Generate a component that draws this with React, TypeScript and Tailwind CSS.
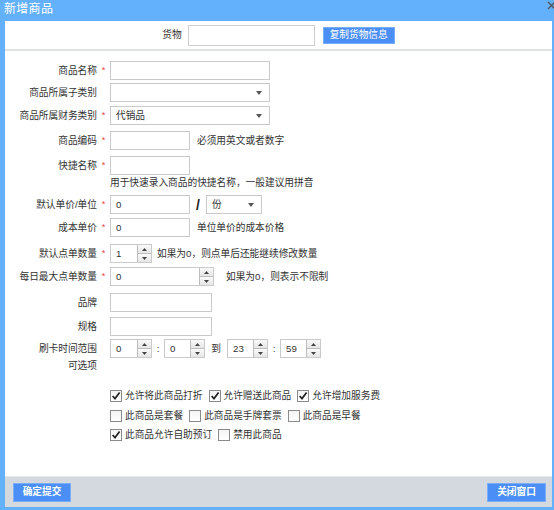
import React from "react";

const FONT = "font-['Liberation_Sans','Noto_Sans_CJK_SC',sans-serif]";

function Star() {
  return <span className="text-[#e4473f] text-[9px] leading-none">*</span>;
}

function Row({
  label,
  req,
  children,
  className,
}: {
  label: string;
  req?: boolean;
  children?: React.ReactNode;
  className: string;
}) {
  return (
    <div className={"flex items-center h-[19px] " + className}>
      <div className="w-[92px] text-right leading-[19px]">{label}</div>
      <div className="w-[13px] flex justify-center items-center">{req ? <Star /> : null}</div>
      {children}
    </div>
  );
}

function Input({ w, v }: { w: string; v?: string }) {
  return (
    <div className={"h-[19px] border border-[#cacaca] bg-white px-[5px] flex items-center leading-none text-[#333] " + w}>
      {v}
    </div>
  );
}

function Arrow({ up }: { up?: boolean }) {
  return (
    <svg width="5" height="3" viewBox="0 0 5 3">
      {up ? <path d="M0 3 L2.5 0 L5 3 Z" fill="#444" /> : <path d="M0 0 L2.5 3 L5 0 Z" fill="#444" />}
    </svg>
  );
}

function Select({ w, v }: { w: string; v?: string }) {
  return (
    <div className={"h-[19px] border border-[#cacaca] bg-white pl-[5px] pr-[7px] flex items-center justify-between text-[#333] " + w}>
      <span className="leading-none">{v}</span>
      <svg width="6" height="4" viewBox="0 0 6 4">
        <path d="M0 0 L3 4 L6 0 Z" fill="#555" />
      </svg>
    </div>
  );
}

function Spin({ w, v }: { w: string; v: string }) {
  return (
    <div className={"h-[19px] flex border border-[#cacaca] bg-white " + w}>
      <div className="flex-1 pl-[5px] flex items-center leading-none text-[#333]">{v}</div>
      <div className="w-[14px] flex flex-col border-l border-[#bdbdbd] bg-[#f0f0f0]">
        <div className="flex-1 flex items-center justify-center border-b border-[#bdbdbd] bg-gradient-to-b from-[#fafafa] to-[#e6e6e6]">
          <Arrow up />
        </div>
        <div className="flex-1 flex items-center justify-center bg-gradient-to-b from-[#fafafa] to-[#e6e6e6]">
          <Arrow />
        </div>
      </div>
    </div>
  );
}

function Check({ on, label, first }: { on?: boolean; label: string; first?: boolean }) {
  return (
    <div className={"flex items-center gap-[3px] " + (first ? "" : "ml-[6px]")}>
      <div className="w-[12px] h-[12px] border border-[#8a8a8a] bg-gradient-to-b from-[#f4f4f4] to-white flex items-center justify-center">
        {on ? (
          <svg width="10" height="10" viewBox="0 0 10 10">
            <path d="M1.6 5 L4 7.6 L8.6 1.6" stroke="#222" strokeWidth="1.7" fill="none" />
          </svg>
        ) : null}
      </div>
      <span className="leading-none whitespace-nowrap">{label}</span>
    </div>
  );
}

export default function App() {
  return (
    <div className={"w-[554px] h-[510px] bg-[#63b0fc] flex flex-col overflow-hidden text-[9.7px] text-[#333] " + FONT}>
      <div className="h-[21px] flex justify-between items-start">
        <span className="pl-[4px] pt-[1px] text-white text-[12px] leading-[13px] tracking-[0.3px] font-['Noto_Sans_CJK_SC',sans-serif]">新增商品</span>
        <svg width="9" height="9" viewBox="0 0 9 9" className="mt-[1px] mr-[-2px]">
          <path d="M1 1 L8 8 M8 1 L1 8" stroke="#555" strokeWidth="1.4" />
        </svg>
      </div>
      <div className="flex-1 ml-[5px] mr-[2px] mb-[3px] flex flex-col bg-white">
        <div className="h-[30px] flex items-center justify-center border-b-2 border-[#dfe2e5]">
          <span className="leading-none">货物</span>
          <div className="ml-[6px] w-[127px] h-[21px] border border-[#cfcfcf] bg-white"></div>
          <div className="ml-[8px] w-[72px] h-[17px] bg-[#4b8ff6] border border-[#78adf8] text-white flex items-center justify-center leading-none">
            复制货物信息
          </div>
        </div>
        <div className="flex-1 flex flex-col">
          <Row label="商品名称" req className="mt-[10px]">
            <Input w="w-[160px]" />
          </Row>
          <Row label="商品所属子类别" className="mt-[3px]">
            <Select w="w-[160px]" />
          </Row>
          <Row label="商品所属财务类别" req className="mt-[4px]">
            <Select w="w-[160px]" v="代销品" />
          </Row>
          <Row label="商品编码" req className="mt-[6px]">
            <Input w="w-[80px]" />
            <span className="ml-[7px] leading-none">必须用英文或者数字</span>
          </Row>
          <Row label="快捷名称" req className="mt-[6px]">
            <Input w="w-[80px]" />
          </Row>
          <div className="h-[16px] pl-[105px] flex items-center leading-none">用于快速录入商品的快捷名称，一般建议用拼音</div>
          <Row label="默认单价/单位" req className="mt-[4px]">
            <Input w="w-[80px]" v="0" />
            <span className="w-[16px] text-center font-bold text-[14px] leading-none text-[#222]">/</span>
            <Select w="w-[56px]" v="份" />
          </Row>
          <Row label="成本单价" req className="mt-[4px]">
            <Input w="w-[80px]" v="0" />
            <span className="ml-[7px] leading-none">单位单价的成本价格</span>
          </Row>
          <Row label="默认点单数量" req className="mt-[7px]">
            <Spin w="w-[42px]" v="1" />
            <span className="ml-[5px] leading-none">如果为0，则点单后还能继续修改数量</span>
          </Row>
          <Row label="每日最大点单数量" req className="mt-[4px]">
            <Spin w="w-[104px]" v="0" />
            <span className="ml-[12px] leading-none">如果为0，则表示不限制</span>
          </Row>
          <Row label="品牌" className="mt-[7px]">
            <Input w="w-[102px]" />
          </Row>
          <Row label="规格" className="mt-[5px]">
            <Input w="w-[102px]" />
          </Row>
          <Row label="刷卡时间范围" className="mt-[3px]">
            <Spin w="w-[42px]" v="0" />
            <span className="w-[12px] text-center leading-none">:</span>
            <Spin w="w-[41px]" v="0" />
            <span className="w-[22px] text-center leading-none">到</span>
            <Spin w="w-[41px]" v="23" />
            <span className="w-[12px] text-center leading-none">:</span>
            <Spin w="w-[41px]" v="59" />
          </Row>
          <div className="h-[16px] flex items-center">
            <div className="w-[92px] text-right leading-none">可选项</div>
          </div>
          <div className="pl-[105px] flex flex-col">
            <div className="h-[14px] mt-[15px] flex items-center">
              <Check first on label="允许将此商品打折" />
              <Check on label="允许赠送此商品" />
              <Check on label="允许增加服务费" />
            </div>
            <div className="h-[14px] mt-[6px] flex items-center">
              <Check first label="此商品是套餐" />
              <Check label="此商品是手牌套票" />
              <Check label="此商品是早餐" />
            </div>
            <div className="h-[14px] mt-[5px] flex items-center">
              <Check first on label="此商品允许自助预订" />
              <Check label="禁用此商品" />
            </div>
          </div>
        </div>
        <div className="h-[31px] bg-[#d3d9de] border-t border-[#e4e8eb] flex items-center justify-between pl-[8px] pr-[6px]">
          <div className="w-[58px] h-[19px] bg-[#4b8ff6] border border-[#7aaef8] text-white font-bold flex items-center justify-center leading-none">
            确定提交
          </div>
          <div className="w-[59px] h-[19px] bg-[#4b8ff6] border border-[#7aaef8] text-white font-bold flex items-center justify-center leading-none">
            关闭窗口
          </div>
        </div>
      </div>
    </div>
  );
}
